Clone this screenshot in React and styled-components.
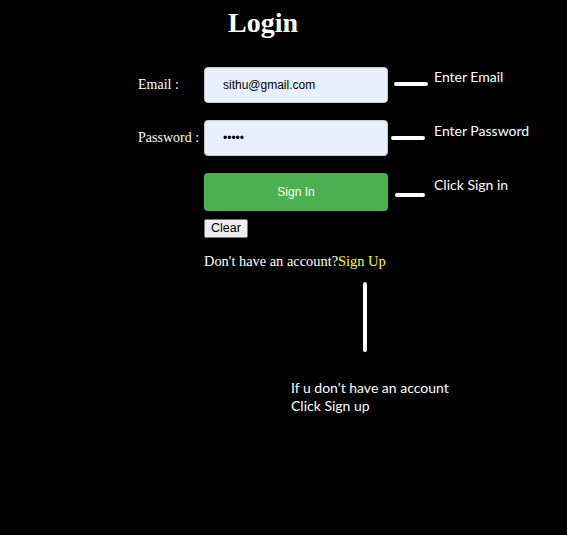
import React, { useState } from 'react';
import styled, { createGlobalStyle } from 'styled-components';

const GlobalStyle = createGlobalStyle`
  html, body {
    margin: 0;
    padding: 0;
    background: #000;
  }
  body {
    font-family: "Liberation Serif", "Times New Roman", serif;
    color: #fff;
  }
`;

const Page = styled.div`
  position: relative;
  width: 567px;
  height: 535px;
  background: #000;
  overflow: hidden;
`;

const Title = styled.h1`
  margin: 0;
  padding-top: 7px;
  width: 526px;
  text-align: center;
  font-size: 28px;
  line-height: 32px;
  font-weight: bold;
  color: #fff;
`;

const Form = styled.form`
  margin: 28px 0 0 138px;
  display: grid;
  grid-template-columns: 66px 184px;
  row-gap: 17px;
  align-items: center;
`;

const Label = styled.label`
  font-size: 14px;
  white-space: pre;
  color: #fff;
`;

const Input = styled.input`
  box-sizing: border-box;
  width: 184px;
  height: 36px;
  padding: 0 18px;
  border: 1px solid #c4c8cf;
  border-radius: 4px;
  background: #e8f0fe;
  color: #000;
  font-family: "Liberation Sans", Arial, sans-serif;
  font-size: 12px;
  outline: none;
`;

const Actions = styled.div`
  grid-column: 2;
  display: flex;
  flex-direction: column;
  align-items: flex-start;
  gap: 8px;
`;

const SignInButton = styled.button`
  width: 184px;
  height: 38px;
  border: none;
  border-radius: 4px;
  background: #4caf50;
  color: #fff;
  font-family: "Liberation Sans", Arial, sans-serif;
  font-size: 12px;
`;

const ClearButton = styled.button`
  height: 19px;
  padding: 0 6px;
  border: 1px solid #767676;
  border-radius: 2px;
  background: #efefef;
  color: #000;
  font-family: "Liberation Sans", Arial, sans-serif;
  font-size: 12.5px;
  line-height: 17px;
`;

const Footer = styled.p`
  margin: 15px 0 0 204px;
  font-size: 14.4px;
  line-height: 16px;
  color: #fff;
`;

const SignUpLink = styled.a`
  color: #ffff00;
  text-decoration: none;
`;

/* annotation callouts drawn over the screenshot: a stroke pointing at a note */
const Callout = styled.div`
  position: absolute;
  left: ${(p) => p.x}px;
  top: ${(p) => p.y}px;
  display: flex;
  flex-direction: ${(p) => (p.vertical ? 'column' : 'row')};
  align-items: flex-start;
  gap: ${(p) => p.gap}px;
`;

const Stroke = styled.span`
  flex: none;
  width: ${(p) => (p.vertical ? 4 : p.len)}px;
  height: ${(p) => (p.vertical ? p.len : 4)}px;
  margin: ${(p) => (p.vertical ? `0 0 0 ${p.offset}px` : `${p.offset}px 0 0 0`)};
  border-radius: 2px;
  background: #fff;
`;

const Note = styled.div`
  font-family: Lato, "Open Sans", sans-serif;
  font-size: 14px;
  line-height: 18px;
  color: #fff;
  white-space: pre;
`;

export default function App() {
  const [email, setEmail] = useState('sithu@gmail.com');
  const [password, setPassword] = useState('12345');

  return (
    <Page>
      <GlobalStyle />
      <Title>Login</Title>
      <Form onSubmit={(e) => e.preventDefault()}>
        <Label htmlFor='email'>Email :</Label>
        <Input id='email' value={email} onChange={(e) => setEmail(e.target.value)} />
        <Label htmlFor='password'>Password :</Label>
        <Input
          id='password'
          type='password'
          value={password}
          onChange={(e) => setPassword(e.target.value)}
        />
        <Actions>
          <SignInButton type='submit'>Sign In</SignInButton>
          <ClearButton
            type='button'
            onClick={() => {
              setEmail('');
              setPassword('');
            }}
          >
            Clear
          </ClearButton>
        </Actions>
      </Form>
      <Footer>
        Don't have an account?<SignUpLink href='#'>Sign Up</SignUpLink>
      </Footer>

      <Callout x={394} y={68} gap={6}>
        <Stroke len={34} offset={14} />
        <Note>Enter Email</Note>
      </Callout>
      <Callout x={391} y={122} gap={9}>
        <Stroke len={34} offset={14} />
        <Note>Enter Password</Note>
      </Callout>
      <Callout x={395} y={176} gap={9}>
        <Stroke len={30} offset={17} />
        <Note>Click Sign in</Note>
      </Callout>
      <Callout vertical x={291} y={282} gap={27}>
        <Stroke vertical len={70} offset={72} />
        <Note>{"If u don't have an account\nClick Sign up"}</Note>
      </Callout>
    </Page>
  );
}
